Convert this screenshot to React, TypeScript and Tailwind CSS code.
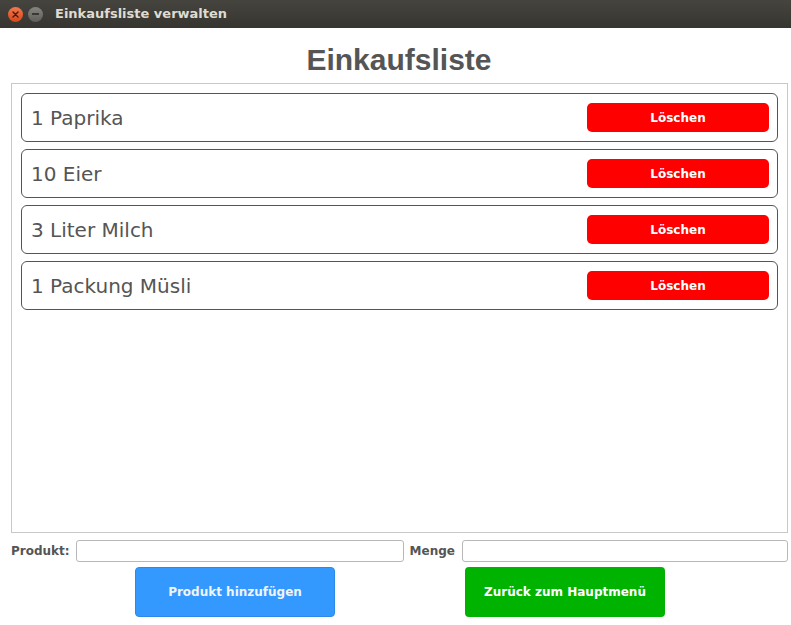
const items = ["1 Paprika", "10 Eier", "3 Liter Milch", "1 Packung Müsli"];

export default function App() {
  return (
    <div className="w-[791px] h-[625px] bg-white flex flex-col overflow-hidden font-['DejaVu_Sans',sans-serif]">
      <div //TITLE BAR
        className="h-[28px] shrink-0 flex items-center bg-gradient-to-b from-[#45443f] to-[#36352f] px-[8px]"
      >
        <div className="w-[15px] h-[15px] rounded-full bg-gradient-to-b from-[#f5774a] to-[#d5471b] flex items-center justify-center">
          <svg width="7" height="7" viewBox="0 0 7 7">
            <path d="M1 1L6 6M6 1L1 6" stroke="#4a1a08" strokeWidth="1.4" strokeLinecap="round" />
          </svg>
        </div>
        <div className="w-[15px] h-[15px] rounded-full bg-gradient-to-b from-[#86857f] to-[#5f5e59] ml-[5px] flex items-center justify-center">
          <div className="w-[7px] h-[2px] bg-[#3a3935]" />
        </div>
        <span className="ml-[12px] text-[13px] font-bold text-[#dfdbd2]">Einkaufsliste verwalten</span>
      </div>

      <h1 className="text-center pl-[7px] font-['Liberation_Sans',sans-serif] font-bold text-[30px] text-[#555555] leading-[33px] mt-[15px] mb-[7px]">
        Einkaufsliste
      </h1>

      <div //LIST PANEL
        className="mx-[11px] mr-[3px] h-[450px] border border-[#c8c8c8] px-[9px] pt-[9px] flex flex-col gap-[7px]"
      >
        {items.map((item) => (
          <div
            key={item}
            className="h-[49px] border border-[#555555] rounded-[6px] flex items-center justify-between pl-[9px] pr-[8px]"
          >
            <span className="text-[20px] text-[#555555]">{item}</span>
            <button className="w-[182px] h-[29px] rounded-[5px] bg-[#ff0000] text-white font-bold text-[12px]">
              Löschen
            </button>
          </div>
        ))}
      </div>

      <div //INPUT ROW
        className="flex items-center h-[22px] mt-[7px] pl-[11px] pr-[3px] text-[12px] font-bold text-[#555555]"
      >
        <span>Produkt:</span>
        <input className="ml-[6px] w-[328px] h-[22px] border border-[#b8b8b8] rounded-[3px]" />
        <span className="ml-[6px]">Menge</span>
        <input className="ml-[7px] flex-1 h-[22px] border border-[#b8b8b8] rounded-[3px]" />
      </div>

      <div //BUTTONS
        className="flex mt-[5px]"
      >
        <button className="ml-[135px] w-[200px] h-[50px] rounded-[4px] bg-[#3399ff] border border-[#2b8ae8] text-[#f0f4fa] font-bold text-[12px]">
          Produkt hinzufügen
        </button>
        <button className="ml-[130px] w-[200px] h-[50px] rounded-[4px] bg-[#00b300] text-white font-bold text-[12px]">
          Zurück zum Hauptmenü
        </button>
      </div>
    </div>
  );
}
